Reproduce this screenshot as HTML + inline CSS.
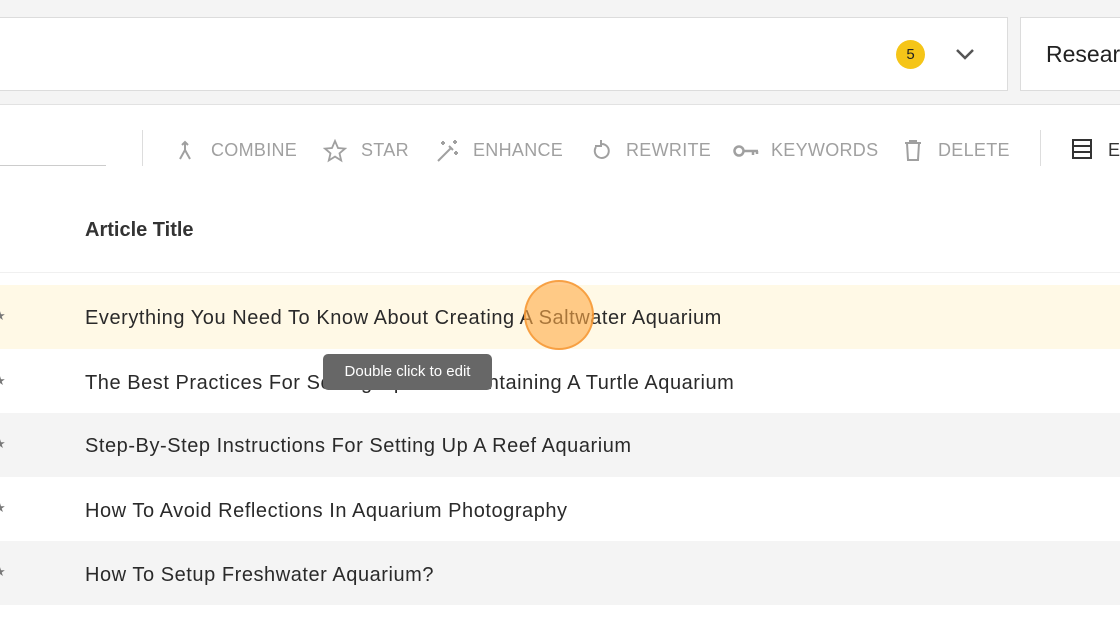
<!DOCTYPE html>
<html><head><style>
body{margin:0;width:1120px;height:630px;overflow:hidden;background:#fff;font-family:"Liberation Sans",sans-serif;position:relative}
.top{position:absolute;left:0;top:0;width:1120px;height:104px;background:#f4f4f4;border-bottom:1px solid #e2e2e2}
.box1{position:absolute;left:-2px;top:17px;width:1008px;height:72px;background:#fff;border:1px solid #dcdcdc}
.box2{position:absolute;left:1020px;top:17px;width:110px;height:72px;background:#fff;border:1px solid #dcdcdc}
.badge{position:absolute;left:896px;top:40px;width:29px;height:29px;border-radius:50%;background:#f5c518;font-size:15px;text-align:center;line-height:29px;color:#222}
.tb{position:absolute;top:140px;font-size:18px;color:#a0a0a0;letter-spacing:.3px}
.row{position:absolute;left:0;width:1120px;height:64px}
.row span{position:absolute;left:85px;top:22px;font-size:20px;letter-spacing:.55px;color:#2a2a2a;white-space:nowrap}
.row i{position:absolute;left:-6px;top:26px;width:10px;height:10px;color:#777;font-style:normal;font-size:13px;line-height:10px}
</style></head><body>
<div class="top"><div class="box1"></div><div class="box2"><span style="position:absolute;left:25px;top:23px;font-size:23px;color:#222">Resear</span></div>
<div class="badge">5</div>
<svg style="position:absolute;left:954px;top:46px" width="22" height="16"><path d="M3 4l8 8 8-8" stroke="#555" stroke-width="2.5" fill="none"/></svg>
</div>
<div style="position:absolute;left:0;top:165px;width:106px;height:1px;background:#ccc"></div>
<div style="position:absolute;left:142px;top:130px;width:1px;height:36px;background:#ddd"></div>
<div style="position:absolute;left:1040px;top:130px;width:1px;height:36px;background:#ddd"></div>
<svg style="position:absolute;left:176px;top:140px" width="20" height="22"><path d="M9 2v8l-5 9M9 10l5 9M6 5l3-3 3 3" stroke="#a0a0a0" stroke-width="2" fill="none"/></svg>
<div class="tb" style="left:211px">COMBINE</div>
<svg style="position:absolute;left:323px;top:139px" width="24" height="24"><path d="M12 2l3 7 7 .6-5.5 4.7 1.7 7.2L12 17.6 5.8 21.5 7.5 14.3 2 9.6 9 9z" stroke="#a0a0a0" stroke-width="1.8" fill="none"/></svg>
<div class="tb" style="left:361px">STAR</div>
<svg style="position:absolute;left:435px;top:138px" width="26" height="26"><path d="M3 23L16 10M14 8l4 4M8 3v4M6 5h4M20 2v4M18 4h4M21 13v4M19 15h4" stroke="#a0a0a0" stroke-width="2" fill="none"/></svg>
<div class="tb" style="left:473px">ENHANCE</div>
<svg style="position:absolute;left:590px;top:139px" width="22" height="24"><path d="M6 8a7 7 0 1 0 5-3M11 1v6H5" stroke="#a0a0a0" stroke-width="2" fill="none"/></svg>
<div class="tb" style="left:626px">REWRITE</div>
<svg style="position:absolute;left:733px;top:143px" width="28" height="16"><circle cx="6" cy="8" r="4.5" stroke="#a0a0a0" stroke-width="2.5" fill="none"/><path d="M10 8h15M20 8v4M24 8v3" stroke="#a0a0a0" stroke-width="2.5"/></svg>
<div class="tb" style="left:771px">KEYWORDS</div>
<svg style="position:absolute;left:903px;top:139px" width="20" height="24"><path d="M2 4h16M7 4V2h6v2M4 4l1 17h10l1-17" stroke="#a0a0a0" stroke-width="2" fill="none"/></svg>
<div class="tb" style="left:938px">DELETE</div>
<svg style="position:absolute;left:1071px;top:138px" width="22" height="22"><rect x="2" y="2" width="18" height="18" stroke="#333" stroke-width="2" fill="none"/><path d="M2 8h18M2 14h18" stroke="#333" stroke-width="2"/></svg>
<div class="tb" style="left:1108px;color:#333">E</div>
<div style="position:absolute;left:85px;top:219px;font-size:20px;font-weight:bold;color:#333">Article Title</div>
<div style="position:absolute;left:0;top:272px;width:1120px;height:1px;background:#f0f0f0"></div>
<div class="row" style="top:285px;background:#fff9e6"><i>★</i><span>Everything You Need To Know About Creating A Saltwater Aquarium</span></div>
<div class="row" style="top:350px;background:#fff"><i>★</i><span>The Best Practices For Setting Up And Maintaining A Turtle Aquarium</span></div>
<div class="row" style="top:413px;background:#f4f4f4;height:64px"><i>★</i><span>Step-By-Step Instructions For Setting Up A Reef Aquarium</span></div>
<div class="row" style="top:477px;background:#fff"><i>★</i><span style="top:23px">How To Avoid Reflections In Aquarium Photography</span></div>
<div class="row" style="top:541px;background:#f4f4f4"><i>★</i><span style="top:23px">How To Setup Freshwater Aquarium?</span></div>
<div style="position:absolute;left:524px;top:280px;width:70px;height:70px;border-radius:50%;background:rgba(255,170,70,.6);border:2px solid rgba(245,150,50,.8);box-sizing:border-box"></div>
<div style="position:absolute;left:323px;top:354px;width:169px;height:36px;border-radius:5px;background:#676767;color:#fff;font-size:15px;text-align:center;line-height:36px">Double click to edit</div>
</body></html>
